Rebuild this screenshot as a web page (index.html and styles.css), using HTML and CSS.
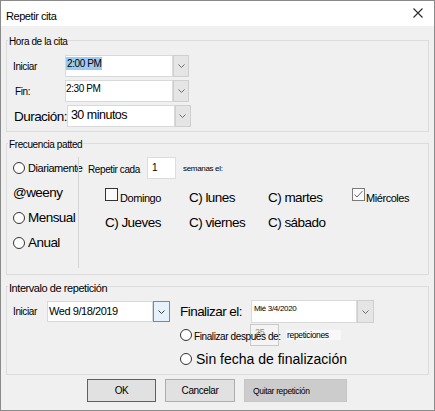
FILE: index.html
```html
<!DOCTYPE html>
<html lang="es">
<head>
<meta charset="utf-8">
<title>Repetir cita</title>
<link rel="stylesheet" href="styles.css">
</head>
<body>
<div class="dialog">
  <div class="titlebar">
    <span class="title">Repetir cita</span>
    <svg class="close" width="10" height="10" viewBox="0 0 10 10"><path d="M0.5 0.5L9.5 9.5M9.5 0.5L0.5 9.5" stroke="#2b2b2b" stroke-width="1.1" fill="none"/></svg>
  </div>

  <div class="group g1">
    <div class="legend">Hora de la cita</div>
    <div class="rows">
      <div class="row">
        <span class="rlabel">Iniciar</span>
        <div class="combo">
          <div class="cinput"><span class="sel">2:00 PM</span></div>
          <div class="cbtn"><svg width="7" height="4" viewBox="0 0 7 4"><path d="M0.5 0.5L3.5 3.5L6.5 0.5" stroke="#6d6d6d" fill="none"/></svg></div>
        </div>
      </div>
      <div class="row">
        <span class="rlabel fin">Fin:</span>
        <div class="combo">
          <div class="cinput">2:30 PM</div>
          <div class="cbtn"><svg width="7" height="4" viewBox="0 0 7 4"><path d="M0.5 0.5L3.5 3.5L6.5 0.5" stroke="#6d6d6d" fill="none"/></svg></div>
        </div>
      </div>
      <div class="row">
        <span class="rlabel big">Duración:</span>
        <div class="combo">
          <div class="cinput big">30 minutos</div>
          <div class="cbtn"><svg width="7" height="4" viewBox="0 0 7 4"><path d="M0.5 0.5L3.5 3.5L6.5 0.5" stroke="#6d6d6d" fill="none"/></svg></div>
        </div>
      </div>
    </div>
  </div>

  <div class="group g2">
    <div class="legend">Frecuencia patted</div>
    <div class="freq">
      <div class="freq-types">
        <div class="ftype"><span class="radio"></span><span class="t12">Diariamente</span></div>
        <div class="ftype"><span class="t15">@weeny</span></div>
        <div class="ftype"><span class="radio"></span><span class="t15">Mensual</span></div>
        <div class="ftype"><span class="radio"></span><span class="t15">Anual</span></div>
      </div>
      <div class="vsep"></div>
      <div class="freq-detail">
        <div class="every">
          <span class="every-label">Repetir cada</span>
          <div class="numbox">1</div>
          <span class="weeks">semanas el:</span>
        </div>
        <div class="days">
          <div class="day"><span class="check"></span><span class="t12">Domingo</span></div>
          <div class="day t15">C) lunes</div>
          <div class="day t15">C) martes</div>
          <div class="day"><span class="check checked"><svg width="11" height="11" viewBox="0 0 11 11"><path d="M1.5 5.5L4 8L9.5 2" stroke="#6a6a6a" stroke-width="1" fill="none"/></svg></span><span class="t12">Miércoles</span></div>
          <div class="day t15">C) Jueves</div>
          <div class="day t15">C) viernes</div>
          <div class="day t15">C) sábado</div>
        </div>
      </div>
    </div>
  </div>

  <div class="group g3">
    <div class="legend l3">Intervalo de repetición</div>
    <div class="range">
      <div class="range-start">
        <span class="slabel">Iniciar</span>
        <div class="combo date">
          <div class="cinput">Wed 9/18/2019</div>
          <div class="cbtn focus"><svg width="7" height="4" viewBox="0 0 7 4"><path d="M0.5 0.5L3.5 3.5L6.5 0.5" stroke="#3a3a3a" fill="none"/></svg></div>
        </div>
      </div>
      <div class="range-end">
        <div class="end-row r1">
          <span class="endby">Finalizar el:</span>
          <div class="combo date2">
            <div class="cinput">Mié 3/4/2020</div>
            <div class="cbtn"><svg width="7" height="4" viewBox="0 0 7 4"><path d="M0.5 0.5L3.5 3.5L6.5 0.5" stroke="#6d6d6d" fill="none"/></svg></div>
          </div>
        </div>
        <div class="end-row r2">
          <span class="radio"></span>
          <span class="after">Finalizar después de:</span>
          <div class="countbox">25</div>
          <span class="reps">repeticiones</span>
        </div>
        <div class="end-row r3">
          <span class="radio"></span>
          <span class="noend">Sin fecha de finalización</span>
        </div>
      </div>
    </div>
  </div>

  <div class="buttons">
    <button class="btn ok">OK</button>
    <button class="btn cancel">Cancelar</button>
    <button class="btn remove">Quitar repetición</button>
  </div>
</div>
</body>
</html>
```

FILE: styles.css
```css
* { box-sizing: border-box; }
html, body { margin: 0; padding: 0; }
body {
  width: 435px;
  height: 411px;
  overflow: hidden;
  background: #f0f0f0;
  font-family: "Liberation Sans", Arial, sans-serif;
  color: #000;
}
.dialog {
  width: 435px;
  height: 411px;
  border: 1px solid #8a8a8a;
  background: #f0f0f0;
  white-space: nowrap;
}
/* condensed look of the original UI font */
.dialog * { letter-spacing: -0.04em; }

/* title bar */
.titlebar {
  height: 25px;
  background: #fff;
  display: flex;
  justify-content: space-between;
  align-items: flex-start;
}
.title { font-size: 11px; line-height: 14px; margin: 8px 0 0 5px; }
.close { margin: 7px 11px 0 0; }

/* group boxes */
.group { margin: 0 5px; border: 1px solid #dcdcdc; }
.g1 { margin-top: 14px; }
.g2, .g3 { margin-top: 11px; }
.legend {
  font-size: 10px;
  line-height: 14px;
  margin: -6px 0 0 1px;
  padding: 0 1px;
  width: max-content;
  background: #f0f0f0;
}
.legend.l3 { font-size: 11px; }

/* time rows */
.rows { margin-top: 6px; padding-bottom: 4px; display: flex; flex-direction: column; gap: 3px; }
.row { display: flex; align-items: center; height: 22px; }
.rlabel {
  flex: 0 0 58px;
  padding-left: 6px;
  font-size: 10px;
  position: relative;
  z-index: 1;
}
.rlabel.fin { padding-left: 8px; }
.rlabel.big { font-size: 13.5px; padding-left: 7px; }
.combo { display: flex; height: 22px; }
.cinput {
  width: 108px;
  height: 100%;
  background: #fff;
  border: 1px solid #d9d9d9;
  font-size: 10px;
  line-height: 13px;
  padding: 1px 0 0 0;
}
.cinput.big { font-size: 12.5px; line-height: 17px; padding: 1px 0 0 3px; }
.sel { background: #9dcaf0; display: inline-block; padding: 0 1px; }
.cbtn {
  width: 16px;
  height: 100%;
  background: #e5e5e5;
  border: 1px solid #cfcfcf;
  display: flex;
  align-items: center;
  justify-content: center;
}

/* frequency */
.freq { display: flex; height: 122px; }
.freq-types { width: 71px; padding: 3px 0 0 6px; }
.ftype { height: 25px; display: flex; align-items: center; }
.radio {
  flex: none;
  width: 12px;
  height: 12px;
  border: 1px solid #333;
  border-radius: 50%;
  background: #fff;
  margin-right: 3px;
}
.t12 { font-size: 11px; }
.t15 { font-size: 13.5px; }
.vsep { width: 1px; height: 111px; margin-top: 5px; background: #d4d4d4; }
.freq-detail { padding-top: 5px; }
.every { display: flex; align-items: center; height: 22px; padding-left: 9px; }
.every-label { width: 59px; font-size: 10px; padding-top: 3px; }
.numbox {
  width: 29px;
  height: 22px;
  background: #fff;
  border: 1px solid #dcdcdc;
  font-size: 10px;
  line-height: 13px;
  padding: 3px 0 0 4px;
}
.weeks { margin-left: 7px; font-size: 8px; }
.days {
  display: grid;
  grid-template-columns: 84px 79px 84px auto;
  grid-auto-rows: 25px;
  margin: 6px 0 0 26px;
}
.day { display: flex; align-items: center; }
.check {
  flex: none;
  width: 13px;
  height: 13px;
  border: 1px solid #333;
  background: #fafafa;
  align-self: flex-start;
  margin: 3px 2px 0 0;
  display: flex;
  align-items: center;
  justify-content: center;
}
.check.checked { border-color: #7a7a7a; margin-right: 1px; }

/* range */
.range { display: flex; align-items: flex-start; margin-top: 5px; padding-bottom: 3px; }
.range-start { display: flex; align-items: center; height: 23px; padding-left: 6px; }
.slabel { width: 34px; font-size: 10px; }
.combo.date { height: 21px; }
.combo.date .cinput { width: 106px; font-size: 11px; line-height: 17px; padding: 1px 0 0 1px; }
.cbtn.focus { width: 17px; background: #e5f1fb; border-color: #4a94de; }
.range-end { margin-left: 10px; }
.end-row { display: flex; align-items: center; }
.r1 { height: 23px; }
.r2, .r3 { height: 24px; }
.endby { width: 71px; font-size: 13.5px; }
.combo.date2 { height: 23px; }
.combo.date2 .cinput { width: 106px; font-size: 8px; line-height: 11px; padding: 2px 0 0 2px; }
.combo.date2 .cbtn { width: 17px; }
.r2 .radio { margin-right: 2px; }
.after { width: 56px; font-size: 10px; position: relative; z-index: 1; padding-top: 2px; }
.countbox {
  width: 29px;
  height: 22px;
  border: 1px solid #c9c9c9;
  background: #f4f4f4;
  color: #8a8a8a;
  font-size: 9px;
  line-height: 11px;
  padding: 2px 0 0 4px;
}
.reps {
  margin-left: 7px;
  padding: 0 12px 0 1px;
  font-size: 8.5px;
  background: #f8f8f8;
}
.dialog .noend {
  font-size: 14px;
  margin-left: 1px;
  letter-spacing: 0;
}

/* buttons */
.buttons { display: flex; gap: 9px; margin: 4px 0 0 86px; }
.btn {
  height: 23px;
  padding: 0;
  border: 1px solid #adadad;
  background: #e1e1e1;
  font-family: inherit;
  font-size: 10px;
  color: #000;
}
.btn.ok { width: 69px; border-color: #0078d7; }
.btn.cancel { width: 70px; }
.btn.remove {
  width: 103px;
  background: #cccccc;
  border-color: #c6c6c6;
  text-align: left;
  padding-left: 8px;
  font-size: 8.5px;
}
```
